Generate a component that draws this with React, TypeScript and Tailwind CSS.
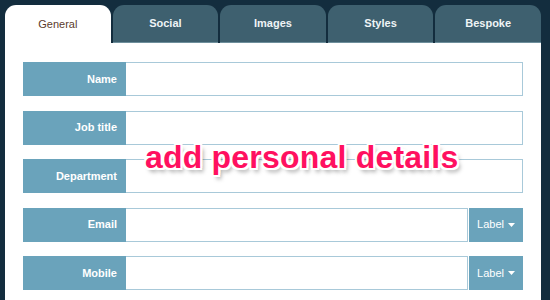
import React from "react";

const tabs = ["General", "Social", "Images", "Styles", "Bespoke"];

const fields = [
  { label: "Name", extra: false },
  { label: "Job title", extra: false },
  { label: "Department", extra: false },
  { label: "Email", extra: true },
  { label: "Mobile", extra: true },
];

export default function App() {
  return (
    <div className="w-[550px] h-[300px] bg-[#132d3e] overflow-hidden font-['Liberation_Sans',Arial,sans-serif]">
      <div className="relative ml-[5px] w-[536px] pt-[5px]">
        {/* Tabs */}
        <div className="flex gap-[2px] h-[38px]">
          {tabs.map((t, i) => (
            <div
              key={t}
              className={`flex-1 rounded-t-[11px] flex items-center justify-center text-[11px] ${
                i === 0
                  ? "bg-white text-[#5c3b2c]"
                  : "bg-[#3e606f] text-[#eef4f6] font-bold border-b border-[#6e8f9c]"
              }`}
            >
              {t}
            </div>
          ))}
        </div>

        {/* Form */}
        <div className="bg-white h-[262px] px-[18px] pt-[19px] flex flex-col gap-[14.5px]">
          {fields.map((f) => (
            <div key={f.label} className="flex h-[34px]">
              <div className="w-[103px] bg-[#6aa3bb] flex items-center justify-end pr-[9px] text-white text-[11px] font-bold">
                {f.label}
              </div>
              <div className="flex-1 border border-[#a8c9d9] border-l-0 bg-white" />
              {f.extra && (
                <div className="w-[55px] bg-[#6aa3bb] border-l border-white flex items-center justify-center gap-[4px] text-white text-[11px]">
                  Label
                  <svg width="7" height="4" viewBox="0 0 7 4">
                    <path d="M0 0h7L3.5 4z" fill="white" />
                  </svg>
                </div>
              )}
            </div>
          ))}
        </div>

        {/* Overlay caption */}
        <div className="absolute left-[140px] top-[133px] text-[#ff1060] text-[32px] font-bold tracking-[0.2px] [text-shadow:-2px_0_0_#fff,2px_0_0_#fff,0_-2px_0_#fff,0_2px_0_#fff,-2px_-2px_0_#fff,2px_2px_0_#fff,-2px_2px_0_#fff,2px_-2px_0_#fff,3px_4px_4px_rgba(0,0,0,0.35)]">
          add personal details
        </div>
      </div>
    </div>
  );
}
